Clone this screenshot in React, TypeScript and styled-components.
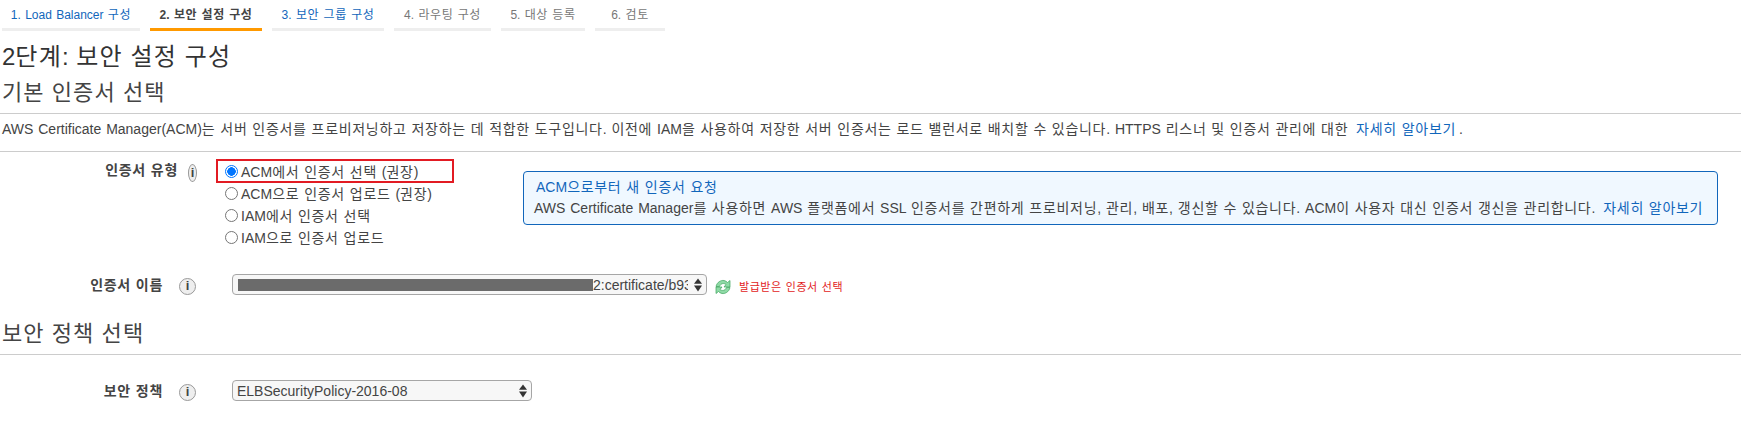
import React from 'react'
import styled, { createGlobalStyle } from 'styled-components'

const FONT = `"Liberation Sans", "Noto Sans CJK KR", sans-serif`

const GlobalStyle = createGlobalStyle`
  html, body {
    margin: 0;
    padding: 0;
    background: #fff;
  }
  body {
    font-family: ${FONT};
    font-size: 14px;
    word-spacing: 0.07em;
    color: #444;
    overflow: hidden;
  }
`

const Page = styled.div`
  width: 1741px;
  height: 444px;
  overflow: hidden;
`

const Wide = styled.span`
  letter-spacing: 0.05em;
`

// hangul runs come out a little narrower here than in the original font
const Txt = ({ children }: { children: string }) => (
  <span>
    {children.split(/([가-힣]+)/).map((part, i) => (i % 2 ? <Wide key={i}>{part}</Wide> : part))}
  </span>
)

const Tabs = styled.div`
  display: flex;
  gap: 10px;
  padding-left: 2px;
  height: 31px;
`

const Tab = styled.div<{ width: number; state: 'link' | 'active' | 'off' }>`
  width: ${({ width }) => width}px;
  height: 31px;
  box-sizing: border-box;
  padding-top: 6px;
  text-align: center;
  font-size: 12px;
  line-height: 18px;
  white-space: nowrap;
  font-weight: ${({ state }) => (state === 'active' ? 700 : 400)};
  color: ${({ state }) => (state === 'link' ? '#1166bb' : state === 'active' ? '#444' : '#777')};
  border-bottom: 3px solid ${({ state }) => (state === 'active' ? '#ff9900' : '#eeeeee')};
`

const Title = styled.h1`
  margin: 10px 0 0 2px;
  font-size: 24px;
  font-weight: 400;
  line-height: 32px;
  color: #333;
`

const SectionTitle = styled.h2<{ top: number }>`
  margin: ${({ top }) => top}px 0 0 2px;
  font-size: 22px;
  font-weight: 400;
  line-height: 30px;
  color: #444;
`

const Rule = styled.div<{ top: number }>`
  margin-top: ${({ top }) => top}px;
  height: 1px;
  background: #cccccc;
`

const Intro = styled.p`
  margin: 0 0 0 2px;
  height: 37px;
  font-size: 14px;
  line-height: 30px;
  white-space: nowrap;
  color: #444;
`

const Link = styled.a`
  color: #1166bb;
  margin: 0 3px;
`

const TypeRow = styled.div`
  display: flex;
  align-items: flex-start;
  height: 100px;
`

const FieldLabel = styled.div<{ width: number; top?: number }>`
  width: ${({ width }) => width}px;
  margin-top: ${({ top }) => top ?? 0}px;
  flex: none;
  text-align: right;
  font-size: 14px;
  font-weight: 700;
  color: #444;
  line-height: 20px;
  white-space: nowrap;
`

const InfoIcon = styled.span<{ squeezed?: boolean }>`
  flex: none;
  box-sizing: border-box;
  display: inline-flex;
  align-items: center;
  justify-content: center;
  width: ${({ squeezed }) => (squeezed ? 9 : 17)}px;
  height: ${({ squeezed }) => (squeezed ? 18 : 17)}px;
  margin: ${({ squeezed }) => (squeezed ? '12px 0 0 10px' : '3px 0 0 16px')};
  border: 1px solid #999;
  border-radius: 50%;
  background: #eeeeee;
  font-size: 13px;
  font-weight: 700;
  line-height: 14px;
  color: #444;
`

const RadioColumn = styled.div`
  flex: none;
  width: 306px;
  margin: 8px 0 0 20px;
`

const RadioRow = styled.div<{ boxed?: boolean }>`
  box-sizing: border-box;
  display: flex;
  align-items: center;
  width: 236px;
  height: 22px;
  font-size: 14px;
  white-space: nowrap;
  color: #444;
  padding-left: 8px;
  outline: ${({ boxed }) => (boxed ? '2px solid #e21b23' : 'none')};
  outline-offset: -1px;
`

const Radio = styled.span<{ checked?: boolean }>`
  flex: none;
  box-sizing: border-box;
  width: 13px;
  height: 13px;
  margin-right: 3px;
  border-radius: 50%;
  border: 1px solid ${({ checked }) => (checked ? '#0075ff' : '#767676')};
  background: ${({ checked }) => (checked ? 'radial-gradient(circle, #0075ff 0 4px, #fff 4.5px)' : '#fff')};
`

const InfoBox = styled.div`
  box-sizing: border-box;
  width: 1195px;
  height: 54px;
  margin-top: 19px;
  padding: 5px 10px 0 10px;
  border: 1px solid #1166bb;
  border-radius: 4px;
  background: #f0f8ff;
  white-space: nowrap;
`

const InfoTitle = styled.div`
  padding-left: 2px;
  font-size: 14px;
  line-height: 21px;
  color: #1166bb;
`

const InfoText = styled.div`
  font-size: 14px;
  line-height: 21px;
  color: #444;
`

const FieldRow = styled.div<{ top: number }>`
  display: flex;
  align-items: center;
  margin-top: ${({ top }) => top}px;
  height: 21px;
`

const SelectBox = styled.div<{ width: number }>`
  flex: none;
  box-sizing: border-box;
  display: flex;
  align-items: center;
  width: ${({ width }) => width}px;
  height: 21px;
  margin-left: 36px;
  padding: 0 3px 0 4px;
  border: 1px solid #a6a6a6;
  border-radius: 4px;
  background: #f7f7f7;
  font-size: 14px;
  color: #444;
  white-space: nowrap;
  overflow: hidden;
`

const SelectValue = styled.span`
  flex: 1;
  display: flex;
  align-items: center;
  overflow: hidden;
  margin-right: 5px;
`

const Redaction = styled.span`
  flex: none;
  width: 355px;
  height: 12px;
  margin-left: 1px;
  background: #6b6b6b;
`

const Arrows = styled.svg`
  flex: none;
  width: 10px;
  height: 14px;
`

const RefreshIcon = styled.svg`
  flex: none;
  width: 16px;
  height: 16px;
  margin: 4px 0 0 8px;
`

const Warning = styled.span`
  margin: 2px 0 0 8px;
  font-size: 11px;
  color: #e21b23;
  white-space: nowrap;
`

const SelectArrows = () => (
  <Arrows viewBox="0 0 10 14">
    <path d="M5 0.5 L9 5.8 L1 5.8 Z" fill="#333" />
    <path d="M1 7.5 L9 7.5 L5 13.5 Z" fill="#333" />
  </Arrows>
)

const ARC = 'M1 7.5 C2 3 6 1 9 1.5 C10.5 1.8 11.5 2.5 12.5 3.5 L15 1.5 L15 8 L9 8 L11 5.5 C9 4 6 4 4.5 7.5 Z'

const tabs = [
  { label: '1. Load Balancer 구성', width: 138, state: 'link' },
  { label: '2. 보안 설정 구성', width: 112, state: 'active' },
  { label: '3. 보안 그룹 구성', width: 112, state: 'link' },
  { label: '4. 라우팅 구성', width: 97, state: 'off' },
  { label: '5. 대상 등록', width: 84, state: 'off' },
  { label: '6. 검토', width: 70, state: 'off' },
] as const

const radios = ['ACM에서 인증서 선택 (권장)', 'ACM으로 인증서 업로드 (권장)', 'IAM에서 인증서 선택', 'IAM으로 인증서 업로드']

export default function App() {
  return (
    <Page>
      <GlobalStyle />
      <Tabs>
        {tabs.map(tab => (
          <Tab key={tab.label} width={tab.width} state={tab.state}>
            <Txt>{tab.label}</Txt>
          </Tab>
        ))}
      </Tabs>
      <Title><Txt>2단계: 보안 설정 구성</Txt></Title>
      <SectionTitle top={5}><Txt>기본 인증서 선택</Txt></SectionTitle>
      <Rule top={5} />
      <Intro>
        <Txt>AWS Certificate Manager(ACM)는 서버 인증서를 프로비저닝하고 저장하는 데 적합한 도구입니다. 이전에 IAM을 사용하여 저장한 서버 인증서는 로드 밸런서로 배치할 수 있습니다. HTTPS 리스너 및 인증서 관리에 대한</Txt>
        <Link> <Txt>자세히 알아보기</Txt></Link>.
      </Intro>
      <Rule top={0} />
      <TypeRow>
        <FieldLabel width={178} top={8}><Txt>인증서 유형</Txt></FieldLabel>
        <InfoIcon squeezed>i</InfoIcon>
        <RadioColumn>
          {radios.map((label, i) => (
            <RadioRow key={label} boxed={i === 0}>
              <Radio checked={i === 0} />
              <Txt>{label}</Txt>
            </RadioRow>
          ))}
        </RadioColumn>
        <InfoBox>
          <InfoTitle><Txt>ACM으로부터 새 인증서 요청</Txt></InfoTitle>
          <InfoText>
            <Txt>AWS Certificate Manager를 사용하면 AWS 플랫폼에서 SSL 인증서를 간편하게 프로비저닝, 관리, 배포, 갱신할 수 있습니다. ACM이 사용자 대신 인증서 갱신을 관리합니다.</Txt>
            <Link> <Txt>자세히 알아보기</Txt></Link>
          </InfoText>
        </InfoBox>
      </TypeRow>
      <FieldRow top={22}>
        <FieldLabel width={163}><Txt>인증서 이름</Txt></FieldLabel>
        <InfoIcon>i</InfoIcon>
        <SelectBox width={475}>
          <SelectValue>
            <Redaction />
            <span>2:certificate/b93</span>
          </SelectValue>
          <SelectArrows />
        </SelectBox>
        <RefreshIcon viewBox="0 0 16 16">
          <path d={ARC} fill="#8fdaa6" stroke="#3da35d" strokeWidth="0.7" />
          <path d={ARC} fill="#8fdaa6" stroke="#3da35d" strokeWidth="0.7" transform="rotate(180 8 8)" />
        </RefreshIcon>
        <Warning><Txt>발급받은 인증서 선택</Txt></Warning>
      </FieldRow>
      <SectionTitle top={24}><Txt>보안 정책 선택</Txt></SectionTitle>
      <Rule top={5} />
      <FieldRow top={25}>
        <FieldLabel width={163}><Txt>보안 정책</Txt></FieldLabel>
        <InfoIcon>i</InfoIcon>
        <SelectBox width={300}>
          <SelectValue>ELBSecurityPolicy-2016-08</SelectValue>
          <SelectArrows />
        </SelectBox>
      </FieldRow>
    </Page>
  )
}
